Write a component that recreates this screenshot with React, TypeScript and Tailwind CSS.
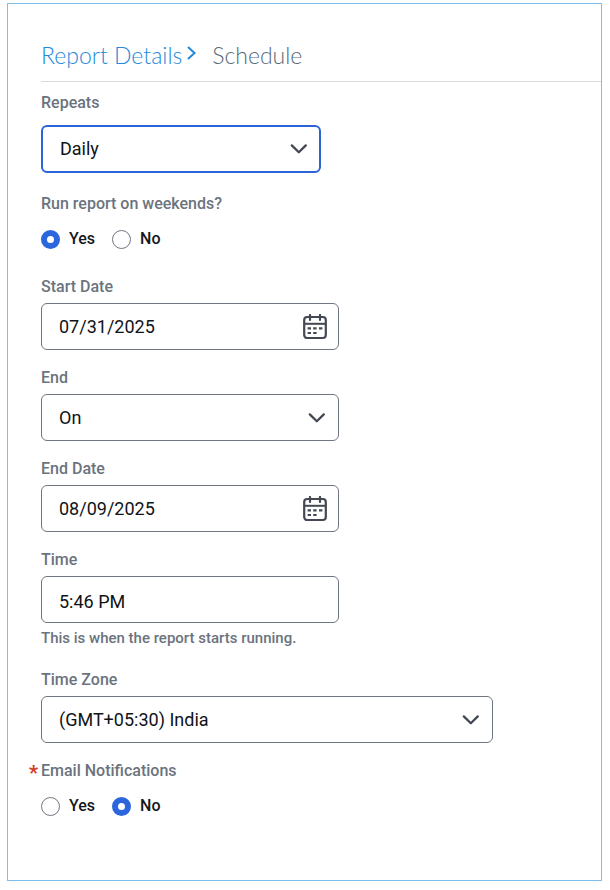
import { useId, useState } from 'react'
import type { ReactNode } from 'react'
import clsx from 'clsx'

const labelClass = 'block text-base leading-6 font-medium text-[#6b737e]'
const controlClass =
  'block w-full appearance-none rounded-md border bg-white pl-[17px] pr-12 text-lg leading-6 text-[#101317] outline-none'

function ChevronDown() {
  return (
    <svg
      className="pointer-events-none absolute top-1/2 right-3 -translate-y-1/2"
      width="20"
      height="20"
      viewBox="0 0 20 20"
      fill="none"
      stroke="#434853"
      strokeWidth="2.3"
      strokeLinecap="round"
      strokeLinejoin="round"
      aria-hidden
    >
      <path d="M2.8 6.4 9.8 13.2 16.8 6.4" />
    </svg>
  )
}

function CalendarIcon() {
  return (
    <svg width="24" height="26" viewBox="0 0 24 26" fill="none" stroke="#434853" aria-hidden>
      <rect x="1.2" y="3" width="21.6" height="21" rx="3" strokeWidth="2.2" />
      <path d="M1.2 9.8H22.8" strokeWidth="2" />
      <path d="M7 1V6M17 1V6" strokeWidth="2.2" strokeLinecap="round" />
      <path
        d="M4.6 14.4H8M10.2 14.4H13.6M16 14.4H19.4M4.6 19H8M10.2 19H13.6"
        strokeWidth="2.2"
      />
    </svg>
  )
}

interface SelectFieldProps {
  label: string
  options: string[]
  className?: string
  active?: boolean
}

function SelectField({ label, options, className, active }: SelectFieldProps) {
  const id = useId()
  const [value, setValue] = useState(options[0])

  return (
    <div className={clsx('max-w-full', className)}>
      <label htmlFor={id} className={labelClass}>
        {label}
      </label>
      <div className={clsx('relative', active ? 'mt-2.5' : 'mt-1')}>
        <select
          id={id}
          value={value}
          onChange={(e) => setValue(e.target.value)}
          className={clsx(
            controlClass,
            active ? 'h-12 border-2 border-[#2b63d9]' : 'h-[47px] border-[#6f7681]',
          )}
        >
          {options.map((option) => (
            <option key={option}>{option}</option>
          ))}
        </select>
        <ChevronDown />
      </div>
    </div>
  )
}

interface TextFieldProps {
  label: string
  initial: string
  calendar?: boolean
  hint?: string
}

function TextField({ label, initial, calendar, hint }: TextFieldProps) {
  const id = useId()
  const [value, setValue] = useState(initial)

  return (
    <div className="w-[298px] max-w-full">
      <label htmlFor={id} className={labelClass}>
        {label}
      </label>
      <div className="relative mt-1">
        <input
          id={id}
          type="text"
          value={value}
          onChange={(e) => setValue(e.target.value)}
          className={clsx(controlClass, 'h-[47px] border-[#6f7681]', !calendar && 'pt-1')}
        />
        {calendar && (
          <button
            type="button"
            aria-label={`Choose ${label}`}
            className="absolute top-1/2 right-3 -translate-y-1/2"
          >
            <CalendarIcon />
          </button>
        )}
      </div>
      {hint && <p className="mt-[5px] mb-1 text-[15px] leading-5 font-medium text-[#6b737e]">{hint}</p>}
    </div>
  )
}

interface YesNoFieldProps {
  label: ReactNode
  initial: 'Yes' | 'No'
}

function YesNoField({ label, initial }: YesNoFieldProps) {
  const name = useId()
  const [value, setValue] = useState<string>(initial)

  return (
    <fieldset>
      <legend className={clsx(labelClass, 'relative')}>{label}</legend>
      <div className="mt-[11px] flex gap-[17px]">
        {['Yes', 'No'].map((option) => (
          <label
            key={option}
            className="flex items-center gap-[9px] text-base leading-6 font-medium text-[#15181c]"
          >
            <input
              type="radio"
              name={name}
              checked={value === option}
              onChange={() => setValue(option)}
              className="size-[19px] appearance-none rounded-full border border-[#6f7681] bg-white checked:border-6 checked:border-[#2b66dc]"
            />
            {option}
          </label>
        ))}
      </div>
    </fieldset>
  )
}

export default function App() {
  return (
    <main className="mt-[3px] mr-2 mb-2 ml-[7px] border border-[#7fbfee] bg-white pb-[62px] pl-[33px] font-['Roboto','Liberation_Sans',sans-serif]">
      <nav
        aria-label="Breadcrumb"
        className="flex items-center border-b border-[#d9dbdd] pt-[35px] pb-2.5 font-['Lato','Open_Sans',sans-serif] text-[23px] leading-8 font-light"
      >
        <a href="#details" className="text-[#2489d8]">
          Report Details
        </a>
        <svg
          className="mr-3.5 mb-1 ml-1"
          width="12"
          height="16"
          viewBox="0 0 12 16"
          fill="none"
          stroke="#2489d8"
          strokeWidth="2"
          aria-hidden
        >
          <path d="M2 2 8.5 8 2 14" />
        </svg>
        <span className="text-[#566b78]">Schedule</span>
      </nav>

      <form className="mt-[9px] flex flex-col gap-4 pr-4">
        <SelectField label="Repeats" options={['Daily', 'Weekly', 'Monthly']} className="w-[280px]" active />
        <div className="mt-[3px] mb-2">
          <YesNoField label="Run report on weekends?" initial="Yes" />
        </div>
        <TextField label="Start Date" initial="07/31/2025" calendar />
        <SelectField label="End" options={['On', 'Never']} className="w-[298px]" />
        <TextField label="End Date" initial="08/09/2025" calendar />
        <TextField label="Time" initial="5:46 PM" hint="This is when the report starts running." />
        <SelectField label="Time Zone" options={['(GMT+05:30) India', '(GMT+00:00) London']} className="w-[452px]" />
        <YesNoField
          label={
            <>
              <span className="absolute top-0.5 -left-3 text-xl leading-6 font-bold text-[#d23b1e]">*</span>
              Email Notifications
            </>
          }
          initial="No"
        />
      </form>
    </main>
  )
}
